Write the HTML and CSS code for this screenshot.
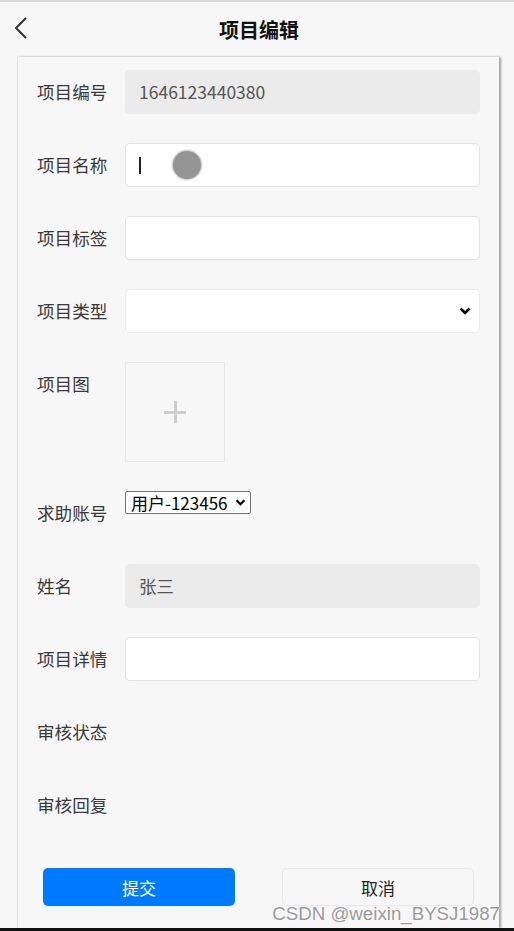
FILE: index.html
```html
<!DOCTYPE html>
<html lang="zh">
<head>
<meta charset="utf-8">
<title>项目编辑</title>
<link rel="stylesheet" href="styles.css">
</head>
<body>
<div class="page">
  <header class="topbar">
    <svg class="back" width="16" height="24" viewBox="0 0 16 24"><path d="M13 2 L3 12 L13 22" fill="none" stroke="#333" stroke-width="2"/></svg>
    <h1 class="title">项目编辑</h1>
  </header>
  <main class="card">
    <div class="row">
      <label class="lbl">项目编号</label>
      <div class="field readonly">1646123440380</div>
    </div>
    <div class="row">
      <label class="lbl">项目名称</label>
      <div class="field input focus"><span class="caret"></span><span class="touch"></span></div>
    </div>
    <div class="row">
      <label class="lbl">项目标签</label>
      <div class="field input"></div>
    </div>
    <div class="row">
      <label class="lbl">项目类型</label>
      <select class="field sel"><option></option></select>
    </div>
    <div class="row">
      <label class="lbl">项目图</label>
      <div class="upload"><span class="plus"></span></div>
    </div>
    <div class="row">
      <label class="lbl">求助账号</label>
      <select class="mini"><option>用户-123456</option></select>
    </div>
    <div class="row">
      <label class="lbl">姓名</label>
      <div class="field readonly">张三</div>
    </div>
    <div class="row">
      <label class="lbl">项目详情</label>
      <div class="field input"></div>
    </div>
    <div class="row">
      <label class="lbl">审核状态</label>
    </div>
    <div class="row">
      <label class="lbl">审核回复</label>
    </div>
    <div class="actions">
      <button class="btn primary">提交</button>
      <button class="btn ghost">取消</button>
    </div>
    <div class="watermark">CSDN @weixin_BYSJ1987</div>
  </main>
  <div class="bottombar"></div>
</div>
</body>
</html>
```
FILE: styles.css
```css
html, body {
  margin: 0;
  padding: 0;
  background: #f7f7f7;
  font-family: "Noto Sans CJK SC", "Noto Sans", sans-serif;
  color: #333;
}
.page {
  height: 931px;
  overflow: hidden;
  display: flex;
  flex-direction: column;
  border-top: 2px solid #d9d9d9;
  box-sizing: border-box;
}
.topbar {
  height: 55px;
  flex: none;
  display: flex;
  align-items: center;
  justify-content: center;
  position: relative;
}
.back {
  position: absolute;
  left: 13px;
  top: 14px;
}
.title {
  margin: 0;
  font-size: 20px;
  font-weight: bold;
  color: #111;
  padding-left: 4px;
}
.card {
  flex: 1;
  margin: 0 15px 0 17px;
  border-left: 1px solid #e4e4e4;
  box-shadow: 2px 0 2px rgba(0,0,0,0.35);
  background: #f7f7f7;
  padding: 13px 19px 0 19px;
  display: flex;
  flex-direction: column;
  gap: 29px;
  position: relative;
}
.row {
  display: flex;
  align-items: flex-start;
  min-height: 44px;
}
.lbl {
  width: 88px;
  flex: none;
  font-size: 17.6px;
  line-height: 44px;
  color: #3a3a3a;
}
.field {
  flex: 1;
  height: 44px;
  box-sizing: border-box;
  border-radius: 5px;
  font-family: inherit;
}
.readonly {
  background: #ebebeb;
  color: #555;
  font-size: 17.5px;
  line-height: 44px;
  padding-left: 14px;
}
.input {
  background: #fff;
  border: 1px solid #e3e3e3;
  position: relative;
}
.caret {
  position: absolute;
  left: 13px;
  top: 13px;
  width: 1.5px;
  height: 17px;
  background: #222;
}
.touch {
  position: absolute;
  left: 47px;
  top: 7px;
  width: 28px;
  height: 28px;
  border-radius: 50%;
  background: #959595;
  box-shadow: 0 0 2px 1px rgba(150,150,150,0.6);
}
.sel {
  -webkit-appearance: none;
  appearance: none;
  background: #fff url("data:image/svg+xml;utf8,<svg xmlns='http://www.w3.org/2000/svg' width='12' height='8' viewBox='0 0 12 8'><path d='M1.5 1.5 L6 6 L10.5 1.5' fill='none' stroke='black' stroke-width='2.6'/></svg>") no-repeat right 8px center / 12px 8px;
  border: 1px solid #ebebeb;
  padding: 0 8px;
  font-size: 16px;
  color: #000;
}
.upload {
  width: 100px;
  height: 100px;
  box-sizing: border-box;
  border: 1px solid #e8e8e8;
  background: #f7f7f7;
  display: flex;
  align-items: center;
  justify-content: center;
}
.plus {
  width: 22px;
  height: 22px;
  background:
    linear-gradient(#cfcfcf, #cfcfcf) center / 22px 3px no-repeat,
    linear-gradient(#cfcfcf, #cfcfcf) center / 3px 22px no-repeat;
}
.mini {
  -webkit-appearance: none;
  appearance: none;
  height: 23px;
  width: 126px;
  font-size: 17px;
  font-family: inherit;
  color: #000;
  background: #fff url("data:image/svg+xml;utf8,<svg xmlns='http://www.w3.org/2000/svg' width='12' height='8' viewBox='0 0 12 8'><path d='M1.5 1.5 L6 6 L10.5 1.5' fill='none' stroke='black' stroke-width='2.6'/></svg>") no-repeat right 4px center / 11px 7px;
  border: 1px solid #767676;
  border-radius: 2px;
  padding: 0 2px 0 5px;
  line-height: 20px;
}
.actions {
  display: flex;
  justify-content: space-between;
  margin-top: 12px;
  padding: 0 6px 0 6px;
}
.btn {
  width: 192px;
  height: 38px;
  border-radius: 5px;
  font-size: 17px;
  font-family: inherit;
  cursor: pointer;
}
.primary {
  background: #007aff;
  color: #fff;
  border: none;
}
.ghost {
  background: #f7f7f7;
  color: #222;
  border: 1px solid #e8e8e8;
}
.watermark {
  position: absolute;
  right: -1px;
  bottom: 3px;
  font-family: "Liberation Sans", Arial, sans-serif;
  font-size: 18.7px;
  color: #9a9a9a;
  text-shadow: 0 0 2px #fff, 0 0 2px #fff;
  white-space: nowrap;
}
.bottombar {
  height: 3px;
  background: #111;
  flex: none;
}
```
